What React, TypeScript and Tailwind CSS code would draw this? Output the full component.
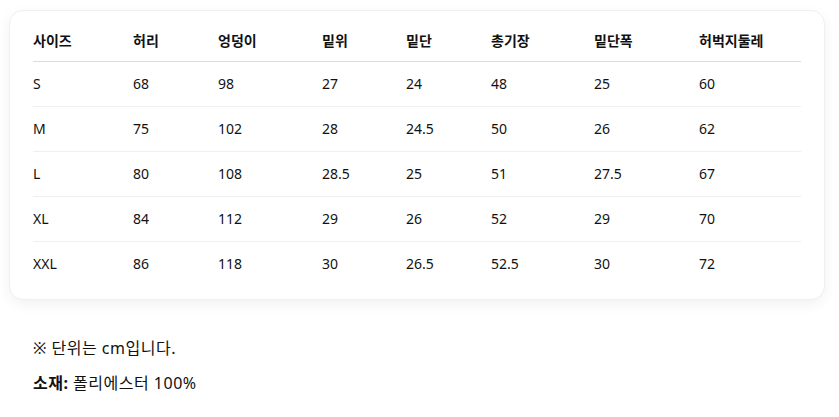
const headers = ["사이즈", "허리", "엉덩이", "밑위", "밑단", "총기장", "밑단폭", "허벅지둘레"];

const rows = [
  ["S", "68", "98", "27", "24", "48", "25", "60"],
  ["M", "75", "102", "28", "24.5", "50", "26", "62"],
  ["L", "80", "108", "28.5", "25", "51", "27.5", "67"],
  ["XL", "84", "112", "29", "26", "52", "29", "70"],
  ["XXL", "86", "118", "30", "26.5", "52.5", "30", "72"],
];

export default function App() {
  return (
    <div className="min-h-screen bg-white pl-[9px] pt-[10px] font-['Noto_Sans','Noto_Sans_CJK_KR',sans-serif] text-[#111]">
      <div className="w-[816px] rounded-[14px] border border-[#f0f0f0] bg-white px-[23px] pt-[6px] pb-[13px] shadow-[0_4px_14px_rgba(0,0,0,0.06)]">
        <table className="w-[768px] table-fixed border-collapse text-left">
          <colgroup>
            <col className="w-[100px]" />
            <col className="w-[85px]" />
            <col className="w-[104px]" />
            <col className="w-[84px]" />
            <col className="w-[85px]" />
            <col className="w-[103px]" />
            <col className="w-[105px]" />
            <col className="w-[102px]" />
          </colgroup>
          <thead>
            <tr className="border-b border-[#dcdcdc]">
              {headers.map((h) => (
                <th key={h} className="pt-[14px] pb-[10px] text-[14px] font-bold leading-5">
                  {h}
                </th>
              ))}
            </tr>
          </thead>
          <tbody>
            {rows.map((r, i) => (
              <tr key={i} className={i < rows.length - 1 ? "border-b border-[#efefef]" : ""}>
                {r.map((c, j) => (
                  <td key={j} className="py-3 text-[14px] leading-5">
                    {c}
                  </td>
                ))}
              </tr>
            ))}
          </tbody>
        </table>
      </div>
      <div className="pl-6 pt-[36px] text-[16px] leading-6 tracking-[0.5px]">
        <p>※ 단위는 cm입니다.</p>
        <p className="mt-[11px]">
          <span className="font-bold">소재:</span> 폴리에스터 100%
        </p>
      </div>
    </div>
  );
}
